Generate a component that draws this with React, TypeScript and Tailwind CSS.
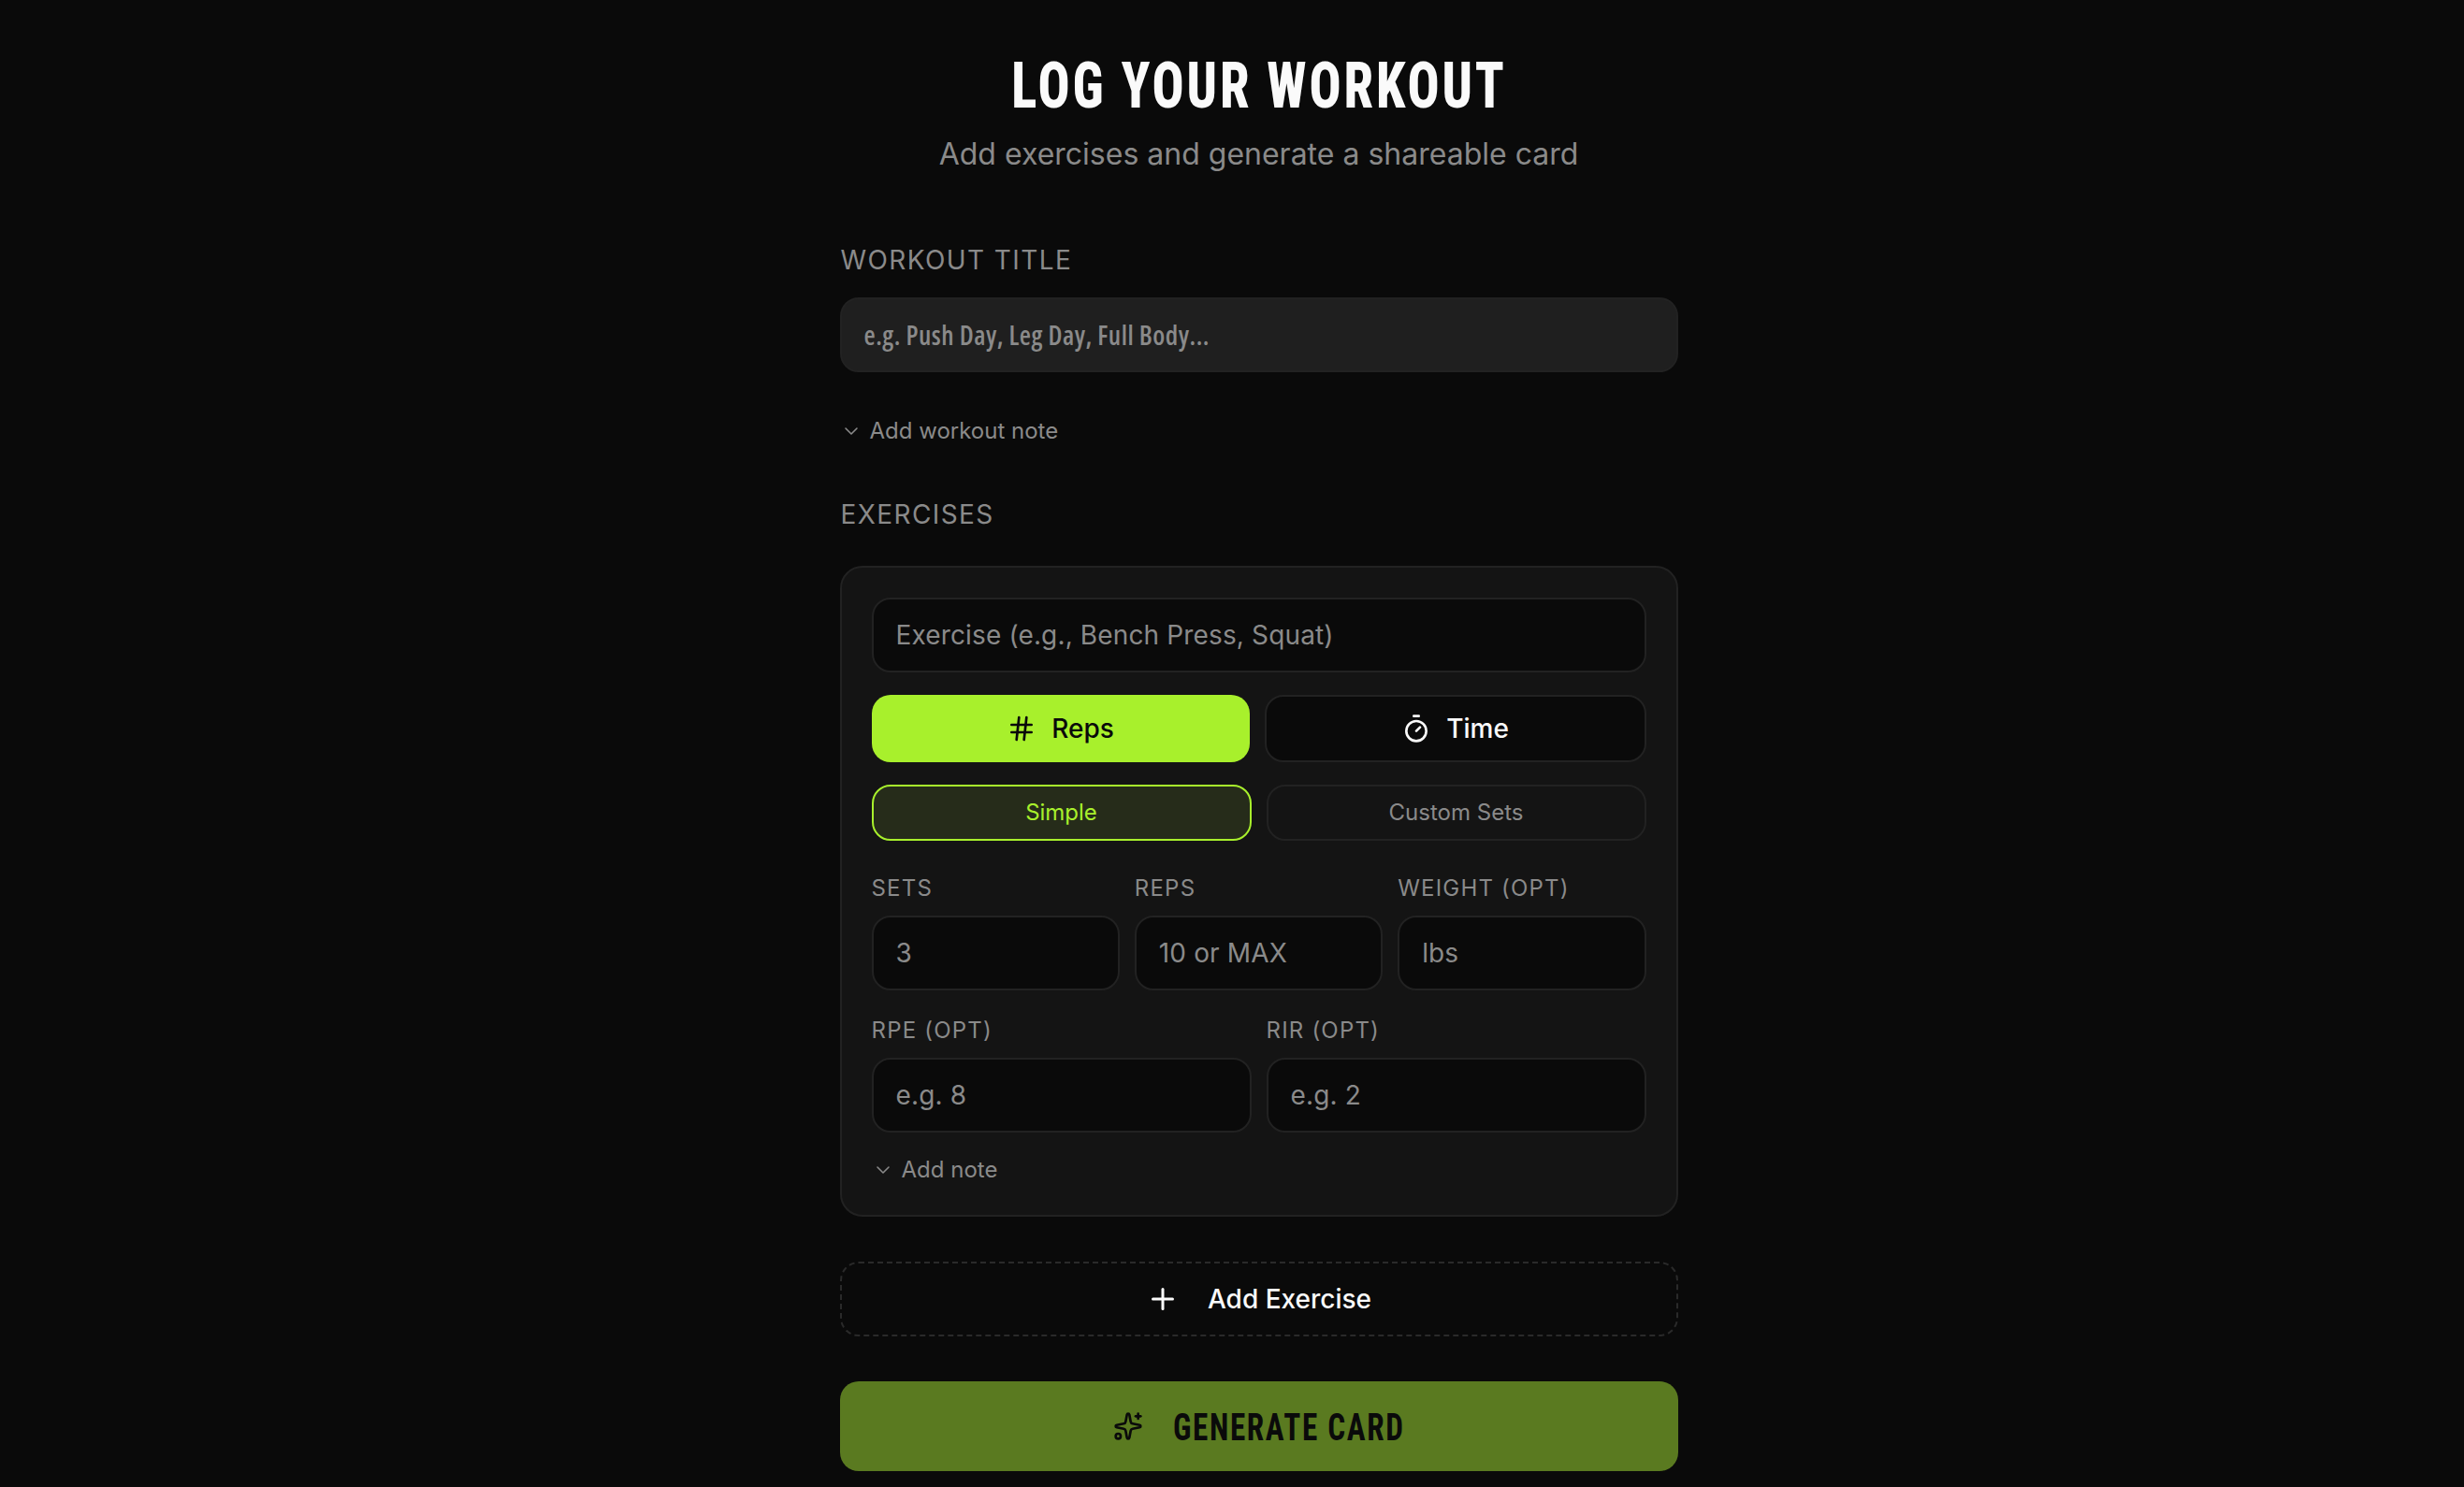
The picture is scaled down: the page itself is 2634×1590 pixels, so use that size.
import { ChevronDown, Hash, Plus, Sparkles, Timer } from "lucide-react";

const inter = "font-['Inter',sans-serif]";
const inputClass =
  "h-[80px] w-full rounded-[20px] border-2 border-[#222222] bg-[#0a0a0a] px-[24px] text-[28px] tracking-[0.14px] text-[#fafafa] outline-none placeholder:text-[#8a8a8a]";

function Field({ label, placeholder }: { label: string; placeholder: string }) {
  return (
    <div className="flex flex-col gap-[20px]">
      <label className="text-[24px] leading-[18px] tracking-[1.2px] text-[#8a8a8a]">{label}</label>
      <input className={inputClass} placeholder={placeholder} />
    </div>
  );
}

function NoteToggle({ label }: { label: string }) {
  return (
    <button type="button" className="flex items-center gap-[8px] text-[24px] leading-[32px] text-[#8a8a8a]">
      <ChevronDown size={24} strokeWidth={1.6} />
      {label}
    </button>
  );
}

export default function App() {
  return (
    <div className={`min-h-screen bg-[#0a0a0a] pl-[57px] ${inter}`}>
      <div className="mx-auto flex w-[896px] flex-col">
        <h1 className="mt-[47px] scale-x-[0.82] text-center font-['Roboto',sans-serif] text-[69px] leading-[90px] font-extrabold font-stretch-75% tracking-[3.5px] text-[#fafafa]">
          LOG YOUR WORKOUT
        </h1>
        <p className="mt-[8px] text-center text-[32px] leading-[40px] text-[#8a8a8a]">
          Add exercises and generate a shareable card
        </p>

        <label className="mt-[77px] pl-[1px] text-[28px] leading-[32px] tracking-[1.4px] text-[#8a8a8a]">WORKOUT TITLE</label>
        <input
          className="mt-[24px] h-[80px] w-full rounded-[20px] border-2 border-[#222222] bg-[#1f1f1f] px-[24px] font-['Open_Sans',sans-serif] text-[28px] font-semibold font-stretch-75% tracking-[0.5px] text-[#fafafa] outline-none placeholder:text-[#8a8a8a]"
          placeholder="e.g. Push Day, Leg Day, Full Body..."
        />
        <div className="mt-[47px]">
          <NoteToggle label="Add workout note" />
        </div>

        <label className="mt-[57px] pl-[1px] text-[28px] leading-[32px] tracking-[1.4px] text-[#8a8a8a]">EXERCISES</label>

        <div className="mt-[39px] flex flex-col rounded-[24px] border-2 border-[#222222] bg-[#141414] p-[32px]">
          <input className={inputClass} placeholder="Exercise (e.g., Bench Press, Squat)" />

          <div className="mt-[24px] grid grid-cols-[404px_1fr] gap-[16px]">
            <button
              type="button"
              className="flex h-[72px] items-center justify-center gap-[16px] rounded-[20px] bg-[#a8f02c] text-[28px] font-medium text-[#0a0a0a]"
            >
              <Hash size={32} strokeWidth={2} />
              Reps
            </button>
            <button
              type="button"
              className="flex h-[72px] items-center justify-center gap-[16px] rounded-[20px] border-2 border-[#222222] bg-[#0a0a0a] text-[28px] font-medium text-[#fafafa]"
            >
              <Timer size={32} strokeWidth={2} />
              Time
            </button>
          </div>

          <div className="mt-[24px] grid grid-cols-2 gap-[16px]">
            <button
              type="button"
              className="h-[60px] rounded-[20px] border-2 border-[#a8f02c] bg-[#262c1a] text-[24px] text-[#a8f02c]"
            >
              Simple
            </button>
            <button
              type="button"
              className="h-[60px] rounded-[20px] border-2 border-[#222222] bg-[#141414] text-[24px] text-[#8a8a8a]"
            >
              Custom Sets
            </button>
          </div>

          <div className="mt-[42px] grid grid-cols-3 gap-[16px]">
            <Field label="SETS" placeholder="3" />
            <Field label="REPS" placeholder="10 or MAX" />
            <Field label="WEIGHT (OPT)" placeholder="lbs" />
          </div>

          <div className="mt-[34px] grid grid-cols-2 gap-[16px]">
            <Field label="RPE (OPT)" placeholder="e.g. 8" />
            <Field label="RIR (OPT)" placeholder="e.g. 2" />
          </div>

          <div className="mt-[24px]">
            <NoteToggle label="Add note" />
          </div>
        </div>

        <button
          type="button"
          className="mt-[48px] flex h-[80px] items-center justify-center gap-[30px] rounded-[20px] border-2 border-dashed border-[#2a2a2a] text-[28px] font-medium text-[#fafafa]"
        >
          <Plus size={36} strokeWidth={2} />
          Add Exercise
        </button>

        <button
          type="button"
          className="mt-[48px] flex h-[96px] items-center justify-center gap-[32px] rounded-[20px] bg-[#5a7a20] font-['Roboto',sans-serif] text-[41px] font-bold font-stretch-75% tracking-[2px] text-[#0a0a0a]"
        >
          <Sparkles size={32} strokeWidth={2} />
          <span className="w-[248px] origin-left scale-x-[0.81] pt-[3px] text-left whitespace-nowrap">GENERATE CARD</span>
        </button>
      </div>
    </div>
  );
}
